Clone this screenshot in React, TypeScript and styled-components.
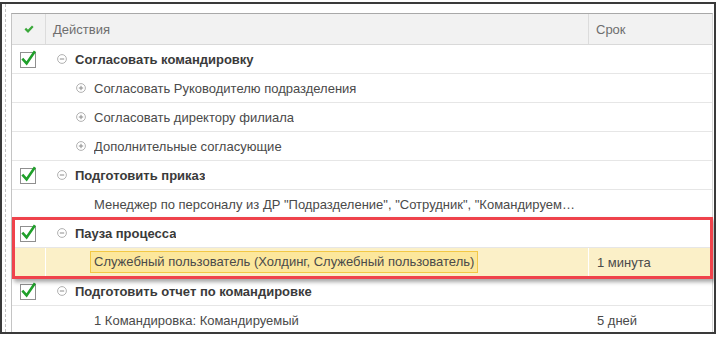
import React from "react";
import styled, { createGlobalStyle } from "styled-components";

const Global = createGlobalStyle`
  html, body { margin: 0; padding: 0; background: #ffffff; }
  body { font-family: "Liberation Sans", Arial, sans-serif; font-size: 13px; color: #404040; }
`;

const Frame = styled.div`
  box-sizing: border-box;
  margin-top: 2px;
  width: 716px;
  height: 332px;
  border: 2px solid #3a3a3a;
  overflow: hidden;
  background: #fff;
`;

const Inner = styled.div`
  box-sizing: border-box;
  height: 100%;
  margin-left: 3px;
  border-left: 1px dashed #c4c4c4;
  padding: 9px 0 0 5px;
`;

const Table = styled.div`
  position: relative;
  box-sizing: border-box;
  width: 702px;
  border-top: 1px solid #a9a9a9;
  border-left: 1px solid #c4c4c4;
  border-right: 1px solid #d6d6d6;
`;

const HeaderRow = styled.div`
  display: grid;
  grid-template-columns: 34px 543px 1fr;
  height: 31px;
  box-sizing: border-box;
  background: #f2f2f2;
  border-bottom: 1px solid #d9d9d9;
`;

const HeadCell = styled.div<{ $sep?: boolean; $center?: boolean }>`
  display: flex;
  align-items: center;
  justify-content: ${(p) => (p.$center ? "center" : "flex-start")};
  padding-left: ${(p) => (p.$center ? "0" : "7px")};
  border-right: ${(p) => (p.$sep ? "1px solid #dcdcdc" : "none")};
  color: #6e6e6e;
  font-size: 13px;
`;

const Row = styled.div<{ $selected?: boolean }>`
  display: grid;
  grid-template-columns: 34px 543px 1fr;
  height: 29px;
  box-sizing: border-box;
  border-bottom: 1px solid #e6e6e6;
  background: ${(p) => (p.$selected ? "#fbf0c8" : "#ffffff")};
`;

const CheckCell = styled.div<{ $selected?: boolean }>`
  display: flex;
  align-items: center;
  justify-content: center;
  padding-right: 1px;
  border-right: 1px solid ${(p) => (p.$selected ? "#ffffff" : "transparent")};
`;

const ActionCell = styled.div<{ $level: number; $selected?: boolean }>`
  display: flex;
  align-items: center;
  min-width: 0;
  padding-left: ${(p) => 11 + p.$level * 19}px;
  padding-right: 10px;
  border-right: 1px solid ${(p) => (p.$selected ? "#ffffff" : "transparent")};
`;

const IconSlot = styled.span`
  flex: none;
  width: 10px;
  height: 10px;
  margin-right: 8px;
  display: inline-flex;
`;

const Label = styled.span<{ $bold?: boolean }>`
  white-space: nowrap;
  overflow: hidden;
  text-overflow: ellipsis;
  font-weight: ${(p) => (p.$bold ? 700 : 400)};
  color: ${(p) => (p.$bold ? "#3a3a3a" : "#4a4a4a")};
`;

const SelectedLabel = styled.span`
  white-space: nowrap;
  margin-left: -4px;
  padding: 0 3px 0 3px;
  height: 20px;
  line-height: 20px;
  background: #fce79c;
  border: 1px solid #f3c845;
  color: #4a4a4a;
`;

const TermCell = styled.div`
  display: flex;
  align-items: center;
  padding-left: 8px;
  color: #4a4a4a;
`;

const Highlight = styled.div`
  position: absolute;
  left: 0px;
  top: 203px;
  width: 701px;
  height: 62px;
  box-sizing: border-box;
  border: 3px solid #ef434c;
  box-shadow: 2px 3px 4px rgba(0, 0, 0, 0.35);
  pointer-events: none;
`;

const CheckBox = () => (
  <svg width="18" height="18" viewBox="0 0 18 18">
    <rect x="1.5" y="2.5" width="15" height="15" fill="#fff" stroke="#8f8f8f" />
    <path d="M4.2 9.6 L7.6 13.4 L15.2 2.4" fill="none" stroke="#1fa02a" strokeWidth="2.6" strokeLinecap="square" />
  </svg>
);

const HeaderCheck = () => (
  <svg width="10" height="8" viewBox="0 0 10 8">
    <path d="M1.3 3.6 L4 6.3 L8.8 1.2" fill="none" stroke="#3aa83a" strokeWidth="2.2" />
  </svg>
);

const Toggle = ({ open }: { open: boolean }) => (
  <svg width="10" height="10" viewBox="0 0 10 10">
    <circle cx="5" cy="5" r="4.4" fill="#fff" stroke="#a8a8a8" strokeWidth="0.9" />
    <path d="M2.8 5 H7.2" stroke="#8c8c8c" strokeWidth="1" />
    {!open && <path d="M5 2.8 V7.2" stroke="#8c8c8c" strokeWidth="1" />}
  </svg>
);

type Item = {
  text: string;
  level: number;
  bold?: boolean;
  checked?: boolean;
  toggle?: "open" | "closed";
  term?: string;
  selected?: boolean;
};

const items: Item[] = [
  { text: "Согласовать командировку", level: 0, bold: true, checked: true, toggle: "open" },
  { text: "Согласовать Руководителю подразделения", level: 1, toggle: "closed" },
  { text: "Согласовать директору филиала", level: 1, toggle: "closed" },
  { text: "Дополнительные согласующие", level: 1, toggle: "closed" },
  { text: "Подготовить приказ", level: 0, bold: true, checked: true, toggle: "open" },
  {
    text: "Менеджер по персоналу из ДР \"Подразделение\", \"Сотрудник\", \"Командируемый\"",
    level: 1,
  },
  { text: "Пауза процесса", level: 0, bold: true, checked: true, toggle: "open" },
  {
    text: "Служебный пользователь (Холдинг, Служебный пользователь)",
    level: 1,
    term: "1 минута",
    selected: true,
  },
  { text: "Подготовить отчет по командировке", level: 0, bold: true, checked: true, toggle: "open" },
  { text: "1 Командировка: Командируемый", level: 1, term: "5 дней" },
];

export default function App() {
  return (
    <>
      <Global />
      <Frame>
        <Inner>
          <Table>
            <HeaderRow>
              <HeadCell $sep $center>
                <HeaderCheck />
              </HeadCell>
              <HeadCell $sep>Действия</HeadCell>
              <HeadCell>Срок</HeadCell>
            </HeaderRow>
            {items.map((it, i) => (
              <Row key={i} $selected={it.selected}>
                <CheckCell $selected={it.selected}>{it.checked && <CheckBox />}</CheckCell>
                <ActionCell $level={it.level} $selected={it.selected}>
                  <IconSlot>{it.toggle && <Toggle open={it.toggle === "open"} />}</IconSlot>
                  {it.selected ? (
                    <SelectedLabel>{it.text}</SelectedLabel>
                  ) : (
                    <Label $bold={it.bold}>{it.text}</Label>
                  )}
                </ActionCell>
                <TermCell>{it.term}</TermCell>
              </Row>
            ))}
            <Highlight />
          </Table>
        </Inner>
      </Frame>
    </>
  );
}
